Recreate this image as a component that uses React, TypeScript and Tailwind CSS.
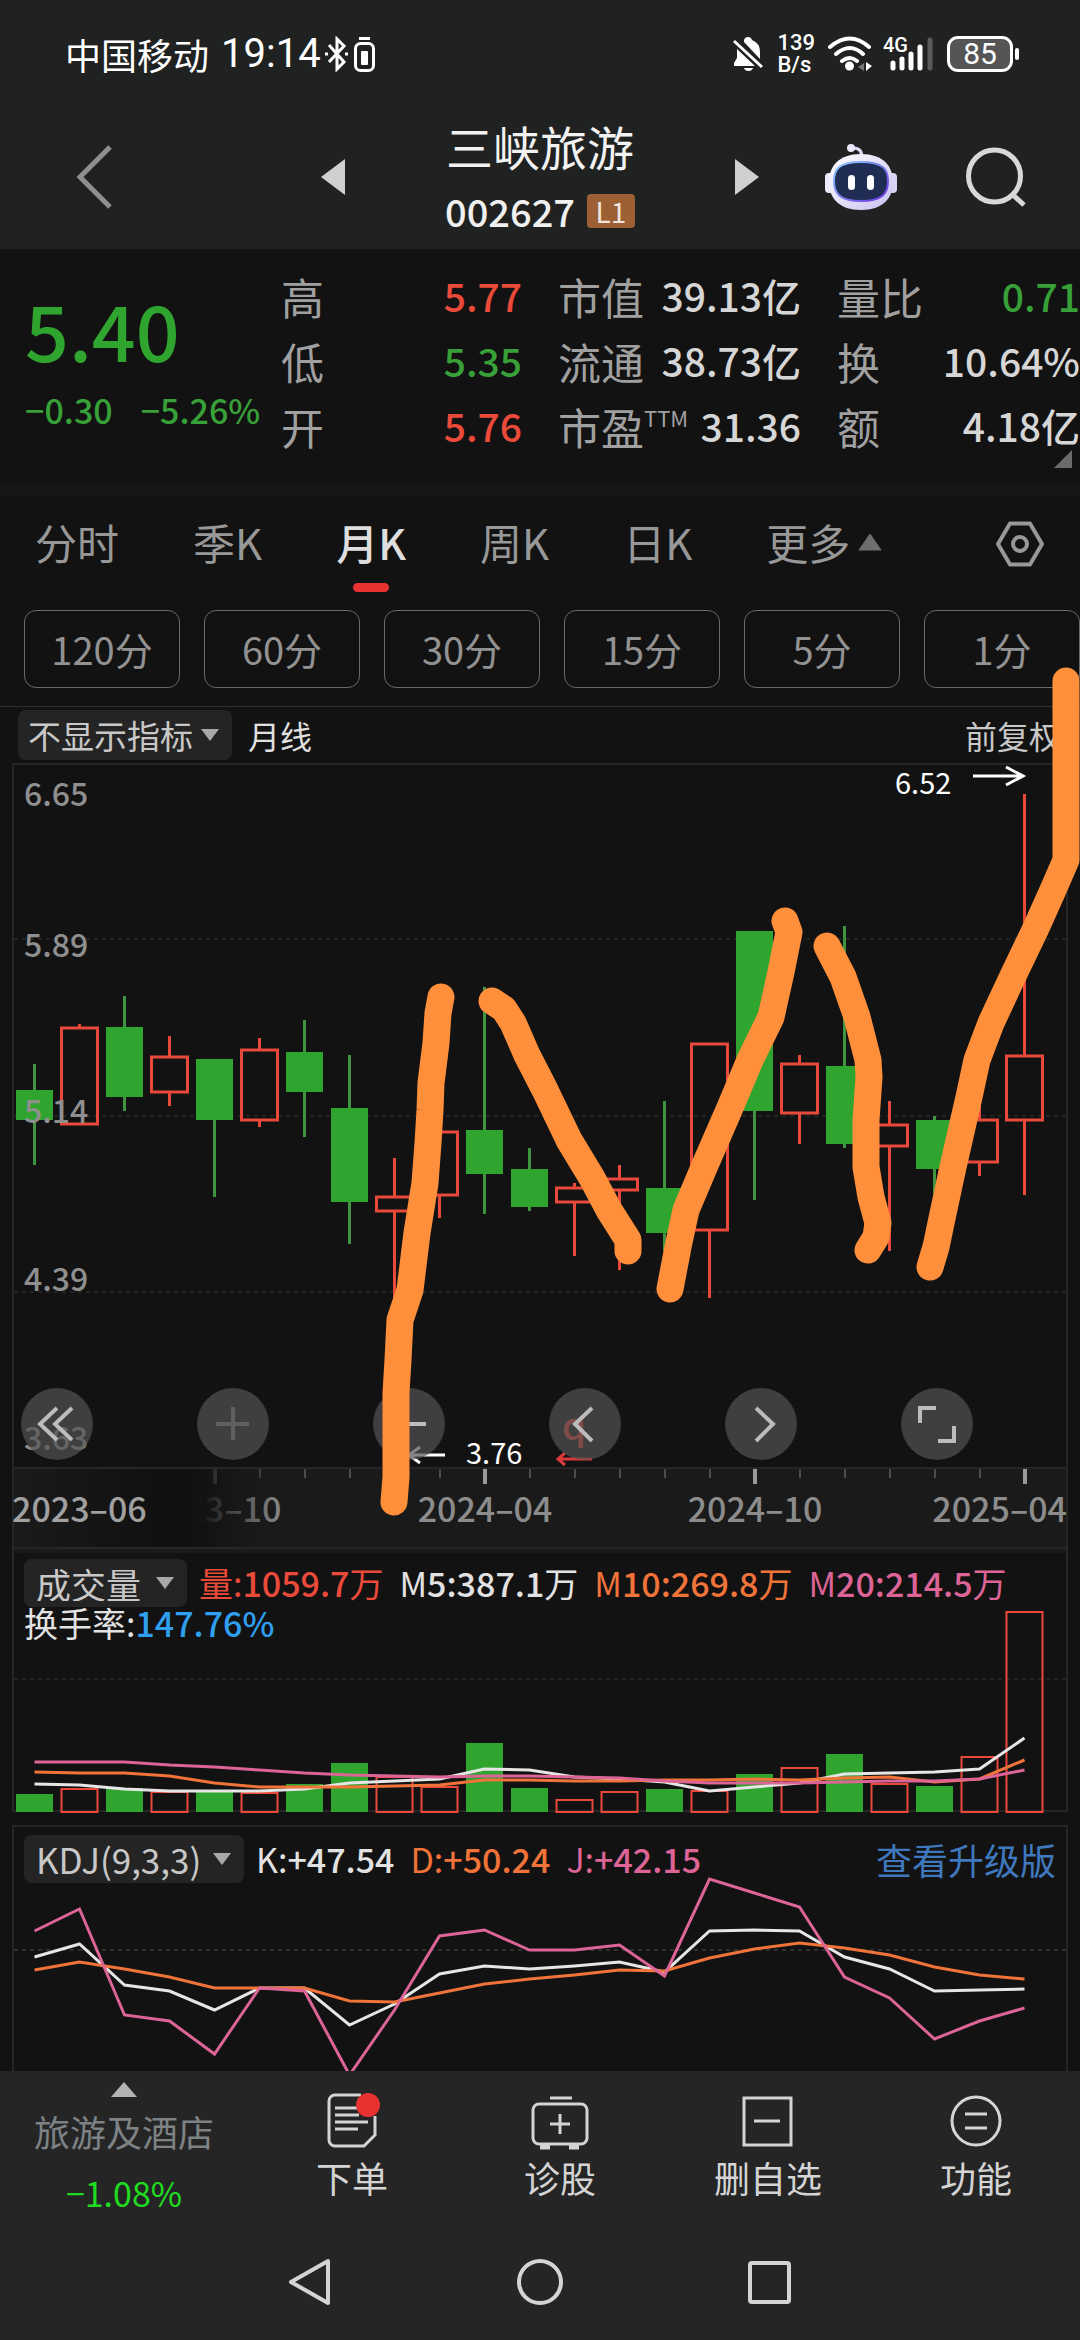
import React, { useState } from 'react';
import clsx from 'clsx';

type Tone = 'up' | 'down' | 'flat';

interface Candle {
  high: number;
  top: number;
  bottom: number;
  low: number;
  up: boolean;
}

const RED = '#e9493a';
const GREEN = '#2fa42f';
const WHITE = '#e6e6e6';
const ORANGE = '#f0733a';
const PINK = '#dc6496';

const toneClass: Record<Tone, string> = {
  up: 'text-[#ea4a3a]',
  down: 'text-[#38a038]',
  flat: 'text-[#d6d6d6]',
};

const STEP = 45;
const xAt = (i: number) => 34.5 + i * STEP;

// [high, open/close top, open/close bottom, low, 1 = up]
const candles: Candle[] = [
  [301, 327, 357, 402, 0],
  [261, 265, 361, 361, 1],
  [233, 264, 334, 348, 0],
  [273, 294, 329, 343, 1],
  [296, 296, 357, 434, 0],
  [275, 287, 357, 364, 1],
  [257, 289, 329, 374, 0],
  [292, 345, 439, 481, 0],
  [395, 434, 448, 690, 1],
  [369, 369, 432, 455, 1],
  [224, 367, 411, 451, 0],
  [385, 406, 444, 448, 0],
  [420, 425, 439, 493, 1],
  [402, 416, 427, 507, 1],
  [338, 425, 470, 488, 0],
  [281, 281, 467, 535, 1],
  [168, 168, 348, 437, 0],
  [292, 301, 350, 381, 1],
  [163, 303, 381, 385, 0],
  [338, 362, 383, 488, 1],
  [353, 357, 406, 430, 0],
  [320, 357, 399, 413, 1],
  [31, 293, 357, 432, 1],
].map(([high, top, bottom, low, up]) => ({ high, top, bottom, low, up: up === 1 }));

const volumes = [
  18, 24, 24, 21, 20, 20, 28, 49, 36, 26, 69, 24, 13, 21, 23, 22, 38, 45, 58, 29, 26, 56, 201,
];

const ma5 = [176, 177, 181, 183, 183, 183, 181, 175, 173, 171, 161, 162, 169, 171, 174, 183, 179, 175, 166, 165, 164, 161, 130];
const ma10 = [164, 165, 165, 168, 175, 179, 179, 179, 178, 177, 172, 172, 173, 173, 172, 172, 171, 172, 170, 169, 174, 171, 152];
const ma20 = [154, 154, 154, 157, 159, 162, 165, 167, 168, 169, 168, 168, 169, 170, 173, 175, 175, 175, 174, 173, 173, 171, 162];

const kLine = [132, 119, 160, 166, 185, 163, 163, 200, 179, 149, 141, 144, 141, 137, 147, 106, 105, 106, 132, 144, 166, 165, 164];
const dLine = [145, 137, 144, 152, 163, 163, 163, 176, 177, 168, 159, 154, 150, 145, 146, 133, 124, 118, 123, 130, 142, 150, 154];
const jLine = [106, 84, 190, 196, 229, 163, 166, 250, 185, 111, 105, 125, 125, 120, 151, 54, 68, 82, 152, 173, 214, 196, 183];

const toPoints = (values: number[]) => values.map((v, i) => `${xAt(i)},${v}`).join(' ');

const quoteColumns: { label: string; sup?: string; value: string; tone: Tone }[][] = [
  [
    { label: '高', value: '5.77', tone: 'up' },
    { label: '低', value: '5.35', tone: 'down' },
    { label: '开', value: '5.76', tone: 'up' },
  ],
  [
    { label: '市值', value: '39.13亿', tone: 'flat' },
    { label: '流通', value: '38.73亿', tone: 'flat' },
    { label: '市盈', sup: 'TTM', value: '31.36', tone: 'flat' },
  ],
  [
    { label: '量比', value: '0.71', tone: 'down' },
    { label: '换', value: '10.64%', tone: 'flat' },
    { label: '额', value: '4.18亿', tone: 'flat' },
  ],
];
const columnWidths = ['w-[241px]', 'ml-9 w-[243px]', 'ml-9 flex-1'];

const periods = ['分时', '季K', '月K', '周K', '日K'];
const minutes = ['120分', '60分', '30分', '15分', '5分', '1分'];

const StatusBar: React.FC = () => (
  <div className="flex h-[108px] items-center justify-between pl-[65px] pr-[61px] text-white">
    <div className="flex items-center">
      <span className="text-[36px]">中国移动</span>
      <span className="ml-3 font-[Roboto,sans-serif] text-[40px]">19:14</span>
      <svg className="ml-1 h-9 w-6" viewBox="0 0 24 36" fill="none" stroke="#fff" strokeWidth="3">
        <path d="M4 9l15 17-7 7V3l7 7L4 26" />
        <path d="M0 18h3M20 18h3" />
      </svg>
      <svg className="ml-1 h-9 w-6" viewBox="0 0 24 36" fill="none" stroke="#fff" strokeWidth="3">
        <path d="M6 2.500h11" />
        <rect x="2.500" y="7.500" width="18" height="27" rx="5" />
        <rect x="8" y="15" width="7" height="14" rx="1" fill="#fff" stroke="none" />
      </svg>
    </div>
    <div className="flex items-center">
      <svg className="h-9 w-[30px]" viewBox="0 0 30 36">
        <path d="M11 4q1-3 4-3t4 3q8 3 8 12v7L11 6zM4 13l18 17H1v-3l3-5z" fill="#fff" />
        <path d="M11 32h9q-1 3-4.500 3T11 32z" fill="#fff" />
        <path d="M1 5l28 26" stroke="#fff" strokeWidth="3" />
      </svg>
      <div className="ml-[14px] flex flex-col font-[Roboto,sans-serif] text-[22px] font-medium leading-[22px]">
        <span>139</span>
        <span>B/s</span>
      </div>
      <svg className="ml-3 h-9 w-[46px]" viewBox="0 0 46 36" fill="none" stroke="#fff" strokeWidth="4" strokeLinecap="round">
        <path d="M3 11q20-17 39 0M9 18q14-12 27 0M15 25q8-6 15 0" />
        <circle cx="22.500" cy="30" r="4.500" fill="#fff" stroke="none" />
        <path d="M37 27v8l-6-4z" fill="#777" stroke="none" />
        <path d="M39 26v9l6-5z" fill="#fff" stroke="none" />
      </svg>
      <div className="relative ml-[10px] h-9 w-[52px]">
        <span className="absolute left-0 top-0 font-[Roboto,sans-serif] text-[20px] font-medium leading-[18px]">4G</span>
        <svg className="h-9 w-[52px]" viewBox="0 0 52 36" strokeWidth="5" strokeLinecap="round" stroke="#fff">
          <path d="M10 27v5M19 23v9M28 18v14M37 11v21" />
          <path d="M47 4v28" stroke="#5a5a5a" />
        </svg>
      </div>
      <div className="ml-3 flex h-9 w-[66px] items-center justify-center rounded-[11px] border-[3px] border-white bg-[#555] font-[Roboto,sans-serif] text-[30px] leading-none">
        85
      </div>
      <span className="ml-0.5 h-3 w-1 rounded bg-white" />
    </div>
  </div>
);

const Robot: React.FC = () => (
  <svg className="h-[66px] w-[72px]" viewBox="0 0 72 66">
    <defs>
      <linearGradient id="shell" x1="0" y1="0" x2="1" y2="1">
        <stop offset="0" stopColor="#ffffff" />
        <stop offset="1" stopColor="#c9c0f2" />
      </linearGradient>
      <linearGradient id="rim" x1="0" y1="0" x2="1" y2="1">
        <stop offset="0" stopColor="#8fd0ff" />
        <stop offset="1" stopColor="#6a2ee0" />
      </linearGradient>
    </defs>
    <path d="M27 4q9-1 10 8" fill="none" stroke="#dedaf5" strokeWidth="3" />
    <circle cx="26" cy="4" r="4" fill="#e9e7fa" />
    <rect x="0" y="29" width="9" height="20" rx="4" fill="#eceafd" />
    <rect x="63" y="29" width="9" height="20" rx="4" fill="#d8d2f5" />
    <path d="M36 10C58 10 68 22 68 38S58 66 36 66 4 54 4 38 14 10 36 10z" fill="url(#shell)" />
    <path
      d="M36 18c22 0 27 7 27 19s-5 20-27 20S9 49 9 37s5-19 27-19z"
      fill="#1f2d55"
      stroke="url(#rim)"
      strokeWidth="2"
    />
    <rect x="23" y="31" width="7" height="15" rx="3.500" fill="#fff" />
    <rect x="42" y="31" width="7" height="15" rx="3.500" fill="#fff" />
  </svg>
);

const TitleBar: React.FC = () => (
  <div className="grid h-[141px] grid-cols-[1fr_390px_1fr] pb-1">
    <div className="flex items-center justify-between pl-[76px]">
      <button aria-label="返回">
        <svg className="h-16 w-9" viewBox="0 0 36 64" fill="none" stroke="#8f8f8f" strokeWidth="5">
          <path d="M34 2L4 32l30 30" />
        </svg>
      </button>
      <button aria-label="上一只">
        <svg className="h-9 w-6" viewBox="0 0 24 36">
          <path d="M24 0v36L0 18z" fill="#cfcfcf" />
        </svg>
      </button>
    </div>
    <div className="flex flex-col items-center pt-2">
      <h1 className="text-[47px] leading-[60px] text-[#f2f2f2]">三峡旅游</h1>
      <div className="flex items-center gap-3 pt-[14px]">
        <span className="text-[38px] font-medium leading-[42px] text-[#f0f0f0]">002627</span>
        <span className="flex h-[34px] w-12 items-center justify-center rounded bg-[#9c6034] text-[28px] leading-none text-[#f0e6de]">
          L1
        </span>
      </div>
    </div>
    <div className="flex items-center">
      <button aria-label="下一只">
        <svg className="h-9 w-6" viewBox="0 0 24 36">
          <path d="M0 0v36l24-18z" fill="#cfcfcf" />
        </svg>
      </button>
      <button className="ml-[66px]" aria-label="智能助手">
        <Robot />
      </button>
      <button className="ml-[69px]" aria-label="搜索">
        <svg className="h-[60px] w-[60px]" viewBox="0 0 60 60" fill="none" stroke="#d8d8d8" strokeWidth="5">
          <circle cx="28.500" cy="29" r="26" />
          <path d="M47 48l11 10" />
        </svg>
      </button>
    </div>
  </div>
);

const Quote: React.FC = () => (
  <section className="relative flex pt-[14px] pb-[26px]">
    <div className="w-[281px] pl-[25px]">
      <div className="pt-[10px] text-[77px] font-medium leading-[112px] text-[#2fa42f]">5.40</div>
      <div className="flex gap-7 text-[34px] font-medium leading-[50px] text-[#38a038]">
        <span>−0.30</span>
        <span>−5.26%</span>
      </div>
    </div>
    {quoteColumns.map((rows, i) => (
      <dl key={i} className={columnWidths[i]}>
        {rows.map((row) => (
          <div key={row.label} className="flex h-[65px] items-center justify-between whitespace-nowrap">
            <dt className="flex items-start text-[43px] leading-[56px] text-[#a0a0a0]">
              {row.label}
              {row.sup && <span className="text-[22px] leading-[38px]">{row.sup}</span>}
            </dt>
            <dd className={clsx('text-[39px] font-medium', toneClass[row.tone])}>{row.value}</dd>
          </div>
        ))}
      </dl>
    ))}
    <svg className="absolute bottom-4 right-2 h-[18px] w-[18px]" viewBox="0 0 18 18">
      <path d="M18 0v18H0z" fill="#6b6b6b" />
    </svg>
  </section>
);

const PeriodTabs: React.FC = () => {
  const [active, setActive] = useState('月K');

  return (
    <nav className="flex h-[114px] items-start pl-[35px] pr-9">
      <div className="flex flex-1 gap-[74px]">
        {periods.map((name) => (
          <button
            key={name}
            onClick={() => setActive(name)}
            className={clsx(
              'flex flex-col items-center text-[42px] leading-[92px]',
              active === name ? 'font-medium text-[#dedede]' : 'text-[#989898]'
            )}
          >
            <span className="h-[87px]">{name}</span>
            {active === name && <span className="h-[9px] w-9 rounded-full bg-[#e83232]" />}
          </button>
        ))}
        <button className="flex h-[92px] items-center gap-2 text-[42px] leading-[92px] text-[#989898]">
          更多
          <svg className="h-[18px] w-6" viewBox="0 0 24 18">
            <path d="M12 1L23 17H1z" fill="#6e6e6e" stroke="#6e6e6e" strokeLinejoin="round" />
          </svg>
        </button>
      </div>
      <button className="flex h-24 items-center" aria-label="设置">
        <svg className="h-[46px] w-12" viewBox="0 0 48 46" fill="none" stroke="#989898" strokeWidth="4">
          <path d="M14 2.500h20L46 23 34 43.500H14L2 23z" strokeLinejoin="round" />
          <circle cx="24" cy="23" r="7" />
        </svg>
      </button>
    </nav>
  );
};

interface PickerProps {
  label: string;
  value: string;
  className: string;
}

const Picker: React.FC<PickerProps> = ({ label, value, className }) => (
  <div className="relative flex items-center">
    <select
      aria-label={label}
      className={clsx('appearance-none rounded-lg bg-[#242424] font-normal text-[#c8c8c8] outline-none', className)}
    >
      <option>{value}</option>
    </select>
    <svg className="pointer-events-none absolute right-3 h-[14px] w-5" viewBox="0 0 20 14">
      <path d="M1 1h18l-9 12z" fill="#a8a8a8" />
    </svg>
  </div>
);

const chartButtons: { name: string; path: string; dim?: boolean }[] = [
  { name: '最左', path: 'M36 20L19 36l17 16M51 20L34 36l17 16' },
  { name: '放大', path: 'M36 19v33M19 36h33', dim: true },
  { name: '缩小', path: 'M19 36h34' },
  { name: '左移', path: 'M43 20L26 36l17 17' },
  { name: '右移', path: 'M31 20l17 16-17 17' },
  { name: '全屏', path: 'M19 35V20h16M53 38v15H37' },
];

const axisLabels = [
  { x: 214, text: '2023–10' },
  { x: 485, text: '2024–04' },
  { x: 755, text: '2024–10' },
];

const PriceChart: React.FC = () => (
  <section className="relative">
    <svg className="block w-full overflow-visible" viewBox="0 0 1080 790" fontSize="32">
      <defs>
        <linearGradient id="fade">
          <stop offset="0" stopColor="#1a1a1a" />
          <stop offset="0.500" stopColor="#111111" />
          <stop offset="0.680" stopColor="#111111" />
          <stop offset="1" stopColor="#1a1a1a" stopOpacity="0" />
        </linearGradient>
      </defs>
      <rect x="12" y="705" width="1056" height="85" fill="#1a1a1a" />
      <path d="M13 790V1h1054v789M12 705h1056M12 785h1056" fill="none" stroke="#262626" strokeWidth="2" />
      <path d="M14 176h1052M14 353h1052M14 529h1052" stroke="#353535" strokeDasharray="4 4" />

      {candles.map((c, i) => {
        const x = xAt(i);
        return c.up ? (
          <g key={i} stroke={RED} strokeWidth="3" fill="none">
            <rect x={x - 18} y={c.top} width="36" height={c.bottom - c.top} />
            <path d={`M${x} ${c.high}V${c.top}M${x} ${c.bottom}V${c.low}`} />
          </g>
        ) : (
          <g key={i} fill={GREEN}>
            <rect x={x - 1.5} y={c.high} width="3" height={c.low - c.high} fill="#3f9440" />
            <rect x={x - 18.5} y={c.top} width="37" height={c.bottom - c.top} />
          </g>
        );
      })}

      <g fill="#8f8f8f" fontWeight="500">
        <text x="24" y="43">6.65</text>
        <text x="24" y="194">5.89</text>
        <text x="24" y="360">5.14</text>
        <text x="24" y="528">4.39</text>
        <text x="24" y="687">3.63</text>
      </g>

      <g fill="#fff" fontSize="29">
        <text x="895" y="31">6.52</text>
        <text x="466" y="701">3.76</text>
      </g>
      <path d="M973 13h50M1006 4l17 9-17 9M445 692h-36M420 684l-11 8 11 8" fill="none" stroke="#fff" strokeWidth="3" />
      <text x="562" y="677" fill="#e83a3a" fontSize="38" fontWeight="500">q</text>
      <path d="M592 696h-34M565 690l-7 6 7 6" fill="none" stroke="#d83a3a" strokeWidth="3" />

      {candles.map((_, i) =>
        i < 4 ? null : (
          <path
            key={i}
            d={(i - 4) % 6 === 0 ? `M${xAt(i) + 0.5} 706v15` : `M${xAt(i) + 0.5} 706v9`}
            stroke={(i - 4) % 6 === 0 ? '#9a9a9a' : '#4c4c4c'}
            strokeWidth={(i - 4) % 6 === 0 ? 4 : 2}
          />
        )
      )}
      <g fill="#8c8c8c" fontSize="34" fontWeight="500">
        {axisLabels.map((l) => (
          <text key={l.text} x={l.x} y="759" textAnchor="middle">
            {l.text}
          </text>
        ))}
        <text x="1067" y="759" textAnchor="end">2025–04</text>
        <rect x="14" y="706" width="270" height="78" fill="url(#fade)" />
        <text x="12" y="759" fill="#a0a0a0">2023–06</text>
      </g>
    </svg>
    <div className="absolute left-[21px] top-[625px] flex gap-[104px]">
      {chartButtons.map((b) => (
        <button key={b.name} aria-label={b.name} className="h-[72px] w-[72px] rounded-full bg-[#525252]/70">
          <svg viewBox="0 0 72 72" fill="none" stroke={b.dim ? '#606060' : '#bcbcbc'} strokeWidth="4">
            <path d={b.path} />
          </svg>
        </button>
      ))}
    </div>
  </section>
);

const VolumeChart: React.FC = () => (
  <section className="relative">
    <svg className="block w-full" viewBox="0 0 1080 272" fill="none">
      <path d="M13 0v258h1054V0" stroke="#262626" strokeWidth="2" />
      <path d="M14 126h1052" stroke="#353535" strokeDasharray="4 4" />
      {volumes.map((v, i) =>
        candles[i].up ? (
          <rect key={i} x={xAt(i) - 18} y={260 - v} width="36" height={v - 1} stroke={RED} strokeWidth="2" />
        ) : (
          <rect key={i} x={xAt(i) - 18.5} y={259 - v} width="37" height={v} fill={GREEN} />
        )
      )}
      <g strokeWidth="3" strokeLinejoin="round" transform="translate(0 55)">
        <polyline points={toPoints(ma5)} stroke={WHITE} />
        <polyline points={toPoints(ma10)} stroke={ORANGE} />
        <polyline points={toPoints(ma20)} stroke={PINK} />
      </g>
    </svg>
    <div className="absolute inset-x-6 top-[6px] text-[34px]">
      <div className="flex h-12 items-center gap-4 whitespace-nowrap font-medium leading-none">
        <div className="-mr-1">
          <Picker label="副图指标" value="成交量" className="h-12 pl-3 pr-[45px] text-[35px]" />
        </div>
        <span className="text-[#ea4a3a]">
          <span className="font-normal">量:</span>1059.7<span className="font-normal">万</span>
        </span>
        <span className="text-[#e2e2e2]">
          <span className="font-normal">M</span>5:387.1<span className="font-normal">万</span>
        </span>
        <span className="text-[#f0733a]">
          <span className="font-normal">M</span>10:269.8<span className="font-normal">万</span>
        </span>
        <span className="text-[#dc6496]">
          <span className="font-normal">M</span>20:214.5<span className="font-normal">万</span>
        </span>
      </div>
      <div className="leading-8 text-[#e2e2e2]">
        换手率:<span className="font-medium text-[#2f9ff0]">147.76%</span>
      </div>
    </div>
  </section>
);

const KdjChart: React.FC = () => (
  <section className="relative">
    <svg className="block w-full overflow-hidden" viewBox="0 0 1080 246" fill="none">
      <path d="M13 246V1h1054v245" stroke="#262626" strokeWidth="2" />
      <path d="M14 125h1052" stroke="#303030" strokeWidth="2" strokeDasharray="4 4" />
      <g strokeWidth="3">
        <polyline points={toPoints(kLine)} stroke={WHITE} />
        <polyline points={toPoints(dLine)} stroke={ORANGE} />
        <polyline points={toPoints(jLine)} stroke={PINK} />
      </g>
    </svg>
    <div className="absolute inset-x-6 top-[10px] flex h-12 items-center whitespace-nowrap text-[34px] font-medium leading-none">
      <Picker label="副图指标" value="KDJ(9,3,3)" className="h-12 pl-3 pr-[42px] text-[35px] leading-[44px]" />
      <div className="ml-3 flex gap-4">
        <span className="text-[#e2e2e2]">
          <span className="font-normal">K:</span>+47.54
        </span>
        <span className="text-[#f0733a]">
          <span className="font-normal">D:</span>+50.24
        </span>
        <span className="text-[#dc6496]">
          <span className="font-normal">J:</span>+42.15
        </span>
      </div>
      <a href="#upgrade" className="ml-auto text-[36px] font-normal text-[#3f78bd]">
        查看升级版
      </a>
    </div>
  </section>
);

const actions = [
  {
    name: '下单',
    icon: (
      <>
        <path d="M39 4H13a6 6 0 0 0-6 6v39a6 6 0 0 0 6 6h29l11-11V25" />
        <path d="M13 17h24M13 24h24M13 31h33M13 38h23" />
        <circle cx="46" cy="14" r="12" fill="#e83232" stroke="none" />
      </>
    ),
  },
  {
    name: '诊股',
    icon: (
      <>
        <rect x="3" y="13" width="54" height="40" rx="6" />
        <path d="M20 7h22M30 23v20M20 33h20" />
        <path d="M10 56h10M39 56h10" strokeWidth="5" />
      </>
    ),
  },
  {
    name: '删自选',
    icon: (
      <>
        <rect x="6" y="7" width="47" height="47" />
        <path d="M16 30h26" />
      </>
    ),
  },
  {
    name: '功能',
    icon: (
      <>
        <circle cx="30" cy="30" r="24" />
        <path d="M19 23h22M19 37h22" />
      </>
    ),
  },
];

const BottomBar: React.FC = () => (
  <footer className="bg-[#252525]">
    <div className="flex h-[152px]">
      <button className="flex w-[248px] flex-col items-center pt-[11px]">
        <svg className="h-[15px] w-[26px]" viewBox="0 0 26 15">
          <path d="M13 0l13 15H0z" fill="#b4b4b4" />
        </svg>
        <span className="pt-[10px] text-[36px] leading-[48px] text-[#7d8285]">旅游及酒店</span>
        <span className="pt-4 text-[34px] leading-[44px] text-[#20dc20]">−1.08%</span>
      </button>
      {actions.map((a) => (
        <button key={a.name} className="flex flex-1 flex-col items-center pt-5">
          <svg className="h-[60px] w-[60px]" viewBox="0 0 60 60" fill="none" stroke="#d4d4d4" strokeWidth="3">
            {a.icon}
          </svg>
          <span className="text-[36px] leading-[52px] text-[#d4d4d4]">{a.name}</span>
        </button>
      ))}
    </div>
    <div className="flex h-[117px] items-center justify-center gap-[182px]">
      <button aria-label="后退">
        <svg className="h-12 w-12" viewBox="0 0 48 48" fill="none" stroke="#d4d4d4" strokeWidth="4" strokeLinejoin="round">
          <path d="M42 3v42L5 24z" />
        </svg>
      </button>
      <button aria-label="主屏幕">
        <svg className="h-12 w-12" viewBox="0 0 48 48" fill="none" stroke="#d4d4d4" strokeWidth="4">
          <circle cx="24" cy="24" r="21" />
        </svg>
      </button>
      <button aria-label="最近任务">
        <svg className="h-12 w-12" viewBox="0 0 48 48" fill="none" stroke="#d4d4d4" strokeWidth="4">
          <rect x="4" y="5" width="39" height="39" rx="2" />
        </svg>
      </button>
    </div>
  </footer>
);

// Freehand marker lines drawn over the chart
const strokes = [
  '441,997 438,1013 436,1043 431,1083 430,1110 428,1143 425,1183 417,1233 410,1290 400,1320 398,1360 396,1393 396,1437 396,1477 394,1502',
  '492,1001 504,1009 513,1023 527,1055 545,1090 569,1140 592,1178 609,1210 628,1240 628,1251',
  '785,921 789,932 781,972 771,1017 750,1060 729,1110 705,1165 686,1210 678,1247 670,1289',
  '827,946 843,977 857,1017 868,1060 869,1077 866,1120 866,1167 871,1197 878,1223 876,1237 868,1250',
  '1066,681 1066,860 1053,890 1036,928 1012,978 991,1023 977,1060 969,1097 953,1167 941,1223 936,1247 930,1267',
];

export default function App() {
  return (
    <main className="relative min-h-screen overflow-hidden bg-[#121212] font-['Noto_Sans_CJK_SC',sans-serif]">
      <header className="bg-[#202221]">
        <StatusBar />
        <TitleBar />
      </header>
      <Quote />
      <div className="h-3 bg-[#161616]" />
      <PeriodTabs />
      <div className="flex gap-6 border-b border-[#2e2e2e] pb-[18px] pl-6">
        {minutes.map((m) => (
          <button
            key={m}
            className="h-[78px] flex-1 rounded-xl border border-[#6a6a6a] text-[38px] leading-none text-[#929292]"
          >
            {m}
          </button>
        ))}
      </div>
      <div className="flex h-14 items-center pl-[18px] pr-[19px] text-[32px] leading-none text-[#e0e0e0]">
        <Picker label="主图指标" value="不显示指标" className="h-[50px] pl-[10px] pr-[39px] text-[33px]" />
        <span className="ml-4 flex-1">月线</span>
        <button className="text-[#c8c8c8]">前复权</button>
      </div>
      <PriceChart />
      <VolumeChart />
      <KdjChart />
      <BottomBar />
      <svg className="pointer-events-none absolute left-0 top-0 w-full" viewBox="0 0 1080 2340" fill="none">
        {strokes.map((points) => (
          <polyline
            key={points}
            points={points}
            stroke="#ff8f3a"
            strokeWidth="27"
            strokeLinecap="round"
            strokeLinejoin="round"
          />
        ))}
      </svg>
    </main>
  );
}
